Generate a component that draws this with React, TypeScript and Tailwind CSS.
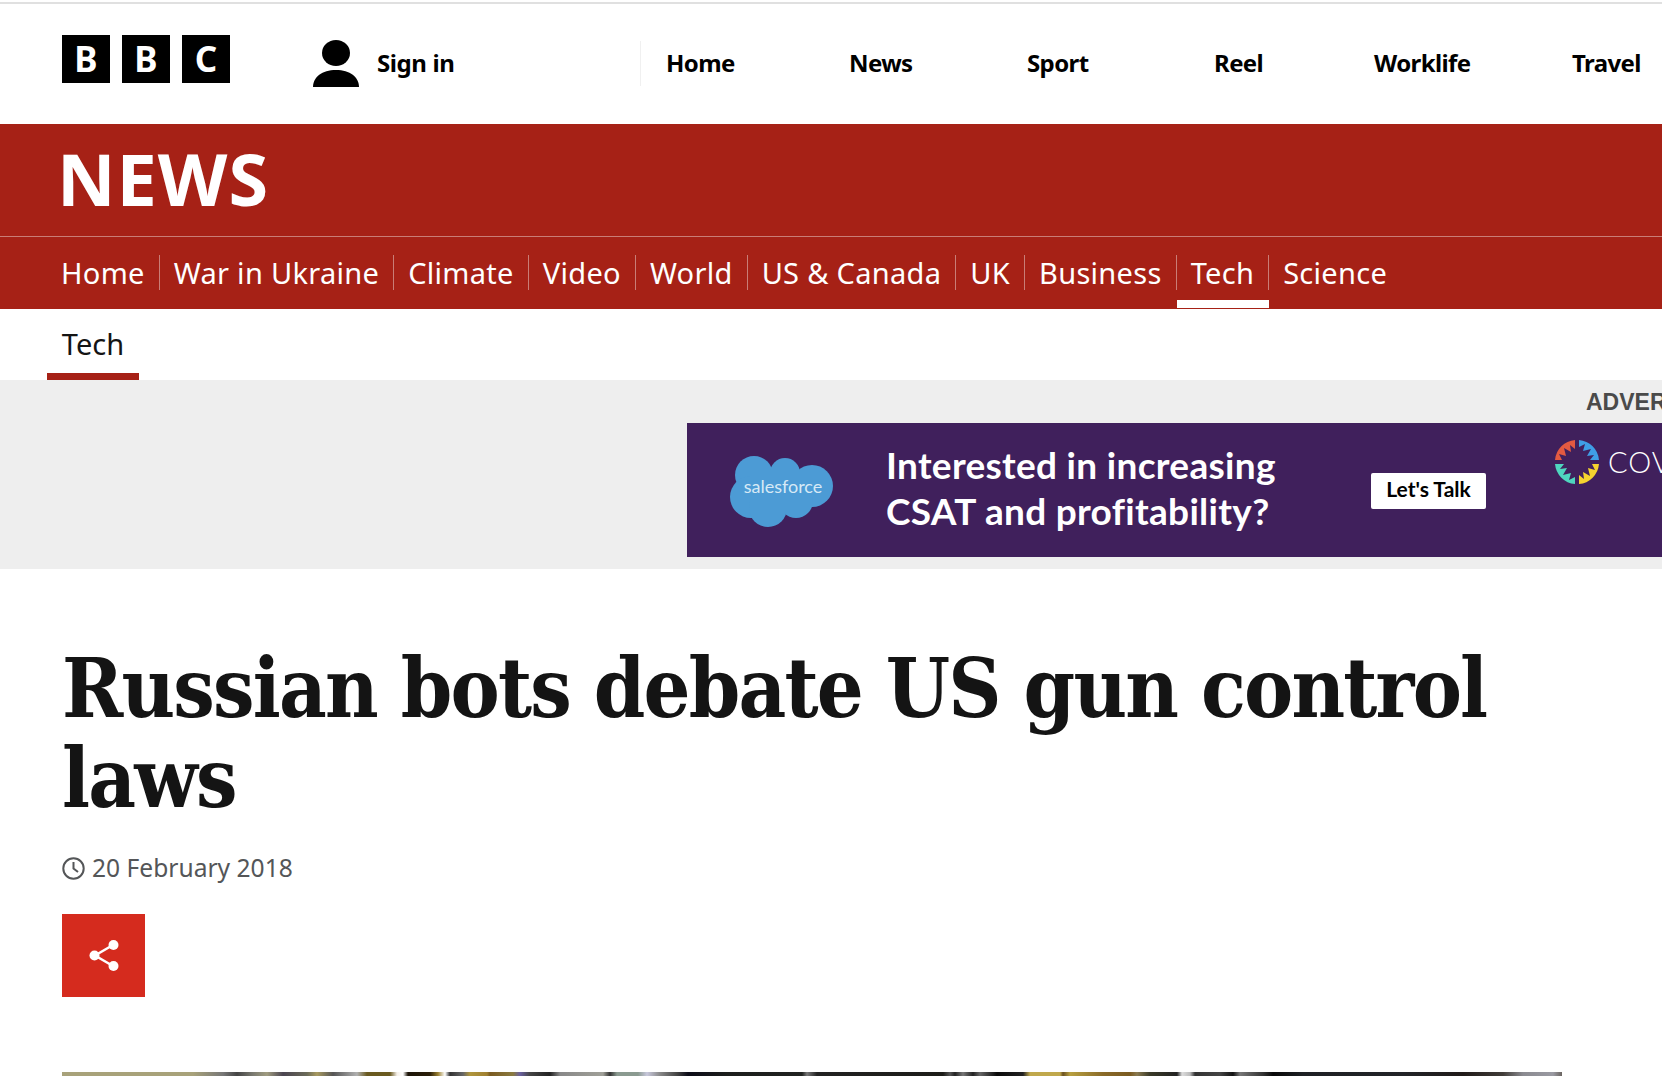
/**
 * BBC News article header
 * Global bar, red News masthead, section tabs, advert band and article title
 */
const globalNav = [
  { label: 'Home', width: 'w-[183px]' },
  { label: 'News', width: 'w-[178px]' },
  { label: 'Sport', width: 'w-[187px]' },
  { label: 'Reel', width: 'w-[160px]' },
  { label: 'Worklife', width: 'w-[198px]' },
  { label: 'Travel', width: 'w-[100px]' },
]

const sections = ['Home', 'War in Ukraine', 'Climate', 'Video', 'World', 'US & Canada', 'UK', 'Business', 'Tech', 'Science']

// colour stops of the top edge of the lead photo: [x in the page, colour]
const photoStops: [number, string][] = [
  [62, '#a8a27a'], [193, '#a8a27a'], [223, '#777777'], [237, '#444444'], [253, '#7a7a70'], [267, '#a09c80'],
  [283, '#4a4450'], [307, '#6a6a58'], [317, '#a89a60'], [333, '#555555'], [357, '#b0b0b0'], [367, '#6a5a20'],
  [390, '#6a5a20'], [397, '#f5f0ea'], [403, '#ffffff'], [408, '#1c1408'], [430, '#2a1e08'], [438, '#9a8030'],
  [445, '#ffffff'], [450, '#333333'], [463, '#666666'], [470, '#b0963c'], [487, '#a08030'], [490, '#7a5a20'],
  [513, '#8a7a40'], [520, '#6a60a0'], [530, '#444444'], [550, '#222222'], [560, '#888888'], [603, '#a0a098'],
  [610, '#333333'], [617, '#8a9a90'], [638, '#8a9a90'], [647, '#c8c8dc'], [660, '#888888'], [677, '#444444'],
  [688, '#0c0c18'], [727, '#1c1e1c'], [802, '#202220'], [807, '#777777'], [817, '#222222'], [943, '#1c1c18'],
  [950, '#555555'], [955, '#222222'], [963, '#777777'], [973, '#222222'], [980, '#666666'], [997, '#0a0a0a'],
  [1023, '#222222'], [1030, '#c0a84c'], [1060, '#c0a84c'], [1063, '#6a5020'], [1070, '#b8a040'], [1103, '#8a6a28'],
  [1130, '#7a5a20'], [1137, '#8a7a50'], [1150, '#3a3a28'], [1177, '#222222'], [1182, '#dddddd'], [1190, '#bbbbbb'],
  [1195, '#333333'], [1220, '#444444'], [1233, '#111111'], [1240, '#777777'], [1263, '#333333'], [1273, '#080808'],
  [1303, '#1e2024'], [1403, '#222428'], [1463, '#201a18'], [1503, '#403c38'], [1523, '#8a8a90'], [1553, '#9a9aa2'],
  [1562, '#6a6460'],
]

const sans = "font-['Noto_Sans',sans-serif]"

function BbcLogo() {
  return (
    <div className="flex gap-3 -mt-[9px] shrink-0">
      {['B', 'B', 'C'].map((letter, i) => (
        <span key={i} className={`w-12 h-12 bg-black text-white flex items-center justify-center text-[35px] font-bold leading-none ${sans}`}>
          {letter}
        </span>
      ))}
    </div>
  )
}

function PersonIcon() {
  return (
    <svg width="46" height="47" viewBox="0 0 46 47" fill="#000" aria-hidden="true">
      <ellipse cx="23" cy="13" rx="14" ry="13" />
      <path d="M0 47C0 37 9 30 23 30s23 7 23 17z" />
    </svg>
  )
}

function SalesforceCloud() {
  return (
    <svg width="104" height="72" viewBox="0 0 104 72">
      <g fill="#4c9bd5">
        <circle cx="24" cy="20" r="19" />
        <circle cx="55" cy="18" r="15" />
        <circle cx="82" cy="31" r="21" />
        <circle cx="21" cy="42" r="21" />
        <circle cx="38" cy="53" r="19" />
        <circle cx="66" cy="46" r="17" />
        <rect x="20" y="15" width="60" height="40" />
      </g>
      <text x="53" y="38" textAnchor="middle" fill="#d6e9f6" fontSize="18" fontFamily="Lato, sans-serif">salesforce</text>
    </svg>
  )
}

function CovLogo() {
  const blade = 'M25 1A22 22 0 0 1 45 21L36 21L40 16L33 17L37 10L29 12L31 5L25 8Z'
  return (
    <svg width="46" height="46" viewBox="0 0 46 46" aria-hidden="true">
      <path d={blade} fill="#3f9ee6" />
      <path d={blade} fill="#f5d32f" transform="rotate(90 23 23)" />
      <path d={blade} fill="#4fd6bf" transform="rotate(180 23 23)" />
      <path d={blade} fill="#e35a41" transform="rotate(270 23 23)" />
    </svg>
  )
}

function ClockIcon() {
  return (
    <svg width="23" height="23" viewBox="0 0 23 23" fill="none" stroke="#545658" strokeWidth="2" aria-hidden="true">
      <circle cx="11.5" cy="11.5" r="10.2" />
      <path d="M11.5 5v6.5l4.5 3.5" />
    </svg>
  )
}

function ShareIcon() {
  return (
    <svg width="30" height="33" viewBox="0 0 30 33" fill="#fff" stroke="#fff" aria-hidden="true">
      <path d="M24 6L6 16.5L24 27" fill="none" strokeWidth="2.5" />
      <circle cx="24.5" cy="6" r="5" stroke="none" />
      <circle cx="5.5" cy="16.5" r="5" stroke="none" />
      <circle cx="24.5" cy="27" r="5" stroke="none" />
    </svg>
  )
}

export default function App() {
  return (
    <div className={`w-[1662px] h-[1076px] overflow-hidden bg-white ${sans}`}>
      <div className="pt-[2px]">
        {/* Global bar */}
        <header className="h-[122px] border-t-2 border-[#e0e0e0] pb-[2px] flex items-center pl-[62px] whitespace-nowrap overflow-hidden">
          <BbcLogo />
          <a className="ml-[83px] flex items-center gap-[18px] w-[327px] shrink-0 text-[24px] font-bold text-black tracking-[-0.4px]">
            <PersonIcon />
            <span>Sign in</span>
          </a>
          <nav className="flex items-center shrink-0 h-[45px] border-l border-[#f0f0f0] pl-[25px] text-[24px] font-bold text-black tracking-[-0.6px]">
            {globalNav.map((item) => (
              <a key={item.label} className={`block shrink-0 ${item.width}`}>{item.label}</a>
            ))}
          </nav>
        </header>

        {/* News masthead */}
        <div className="bg-[#a62116] text-white">
          <div className="h-[113px] border-b border-[#c97d76] pl-[57px] pb-[4px] flex items-center">
            <span className="text-[72px] font-bold leading-none tracking-[1px]">NEWS</span>
          </div>
          <nav className="h-[72px] pl-[61px] pt-[18px] flex items-start text-[29px] leading-[35px] tracking-[0.3px] whitespace-nowrap">
            {sections.map((name) => (
              <a key={name} className="relative h-[35px] px-[14px] first:pl-0 last:border-r-0 border-r border-[#c97d76]">
                {name}
                {name === 'Tech' && <span className="absolute left-0 -right-px -bottom-[18px] h-2 bg-white" />}
              </a>
            ))}
          </nav>
        </div>

        {/* Section tab */}
        <div className="h-[71px] pl-[47px]">
          <a className="block w-[92px] h-full border-b-[7px] border-[#a62116] text-center text-[29px] leading-[70px] text-[#141414]">Tech</a>
        </div>

        {/* Advert band */}
        <div className="h-[189px] bg-[#eeeeee] whitespace-nowrap pt-[9px]">
          <p className="pl-[1586px] h-[34px] font-['Liberation_Sans',sans-serif] font-bold text-[23px] leading-[26px] text-[#4a4a4a] overflow-hidden">ADVERTISEMENT</p>
          <div className="ml-[687px] h-[134px] bg-[#40205c] flex items-start text-white font-['Lato',sans-serif] overflow-hidden">
            <div className="ml-[43px] mt-[32px] shrink-0"><SalesforceCloud /></div>
            <div className="ml-[52px] mt-[19px] w-[485px] shrink-0 font-bold text-[37px] leading-[46px] tracking-[0.3px]">
              <p>Interested in increasing</p>
              <p>CSAT and profitability?</p>
            </div>
            <a className="mt-[50px] w-[115px] h-[36px] pb-[5px] shrink-0 bg-white rounded-[2px] flex items-center justify-center text-black font-bold text-[21px]">Let's Talk</a>
            <div className="ml-[68px] mt-[16px] flex items-center gap-2 shrink-0">
              <CovLogo />
              <span className="text-[29px] tracking-[1px] font-light -mt-px">COVEO</span>
            </div>
          </div>
        </div>

        {/* Article head */}
        <main className="pl-[62px] pt-[74px]">
          <h1 className="w-[1500px] font-['DejaVu_Serif_Condensed','DejaVu_Serif',serif] font-bold text-[82px] leading-[90px] tracking-[-1.8px] text-[#141414]">
            Russian bots debate US gun control laws
          </h1>
          <p className="mt-[30px] flex items-center gap-[7px] text-[24.6px] leading-[30px] text-[#545658]">
            <ClockIcon />
            <time>20 February 2018</time>
          </p>
          <button className="mt-[31px] w-[83px] h-[83px] bg-[#d52b1e] flex items-center justify-center" aria-label="Share">
            <ShareIcon />
          </button>
          <svg className="block mt-[75px]" width="1500" height="4" aria-hidden="true">
            <defs>
              <linearGradient id="photo-edge">
                {photoStops.map(([x, colour]) => (
                  <stop key={x} offset={(x - 62) / 1500} stopColor={colour} />
                ))}
              </linearGradient>
            </defs>
            <rect width="1500" height="4" fill="url(#photo-edge)" />
          </svg>
        </main>
      </div>
    </div>
  )
}
